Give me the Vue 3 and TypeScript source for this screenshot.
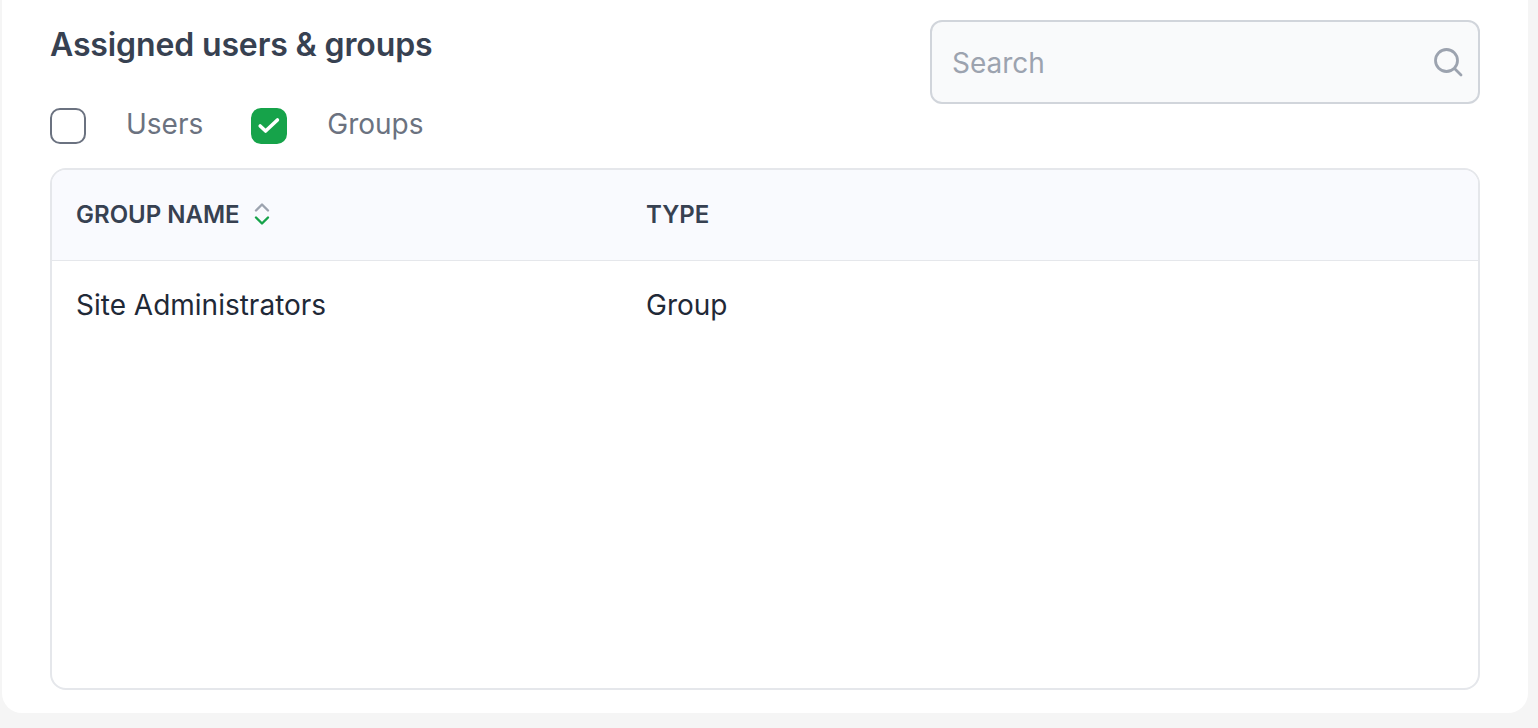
<template>
  <div class="page">
    <section class="card">
      <div class="top">
        <div class="left">
          <h2 class="title">Assigned users &amp; groups</h2>
          <div class="filters">
            <label v-for="f in filters" :key="f.id" class="filter">
              <span class="box" :class="{ checked: f.checked }">
                <svg v-if="f.checked" width="24" height="24" viewBox="0 0 24 24" fill="none">
                  <path d="M3.2 12 8.6 17 20.4 6" stroke="#fff" stroke-width="3.6" stroke-linecap="round" stroke-linejoin="round" />
                </svg>
              </span>
              <span class="filter-label">{{ f.name }}</span>
            </label>
          </div>
        </div>
        <div class="search">
          <span class="placeholder">Search</span>
          <svg width="32" height="32" viewBox="0 0 32 32" fill="none">
            <circle cx="14.5" cy="14.5" r="11" stroke="#9ca3af" stroke-width="2.8" />
            <path d="M23 23l6 6" stroke="#9ca3af" stroke-width="2.8" stroke-linecap="round" />
          </svg>
        </div>
      </div>

      <div class="table">
        <div class="row head">
          <div class="cell name">
            GROUP NAME
            <svg class="sort" width="18" height="24" viewBox="0 0 18 24" fill="none">
              <path d="M3 8.5 9 2.5l6 6" stroke="#9ca3af" stroke-width="2.4" stroke-linecap="round" stroke-linejoin="round" />
              <path d="M3 15.5 9 21.5l6-6" stroke="#16a34a" stroke-width="2.4" stroke-linecap="round" stroke-linejoin="round" />
            </svg>
          </div>
          <div class="cell">TYPE</div>
        </div>
        <div v-for="r in rows" :key="r.name" class="row body">
          <div class="cell name">{{ r.name }}</div>
          <div class="cell">{{ r.type }}</div>
        </div>
      </div>
    </section>
  </div>
</template>

<script setup lang="ts">
import { ref } from 'vue'

interface Filter {
  id: number
  name: string
  checked: boolean
}

const filters = ref<Filter[]>([
  { id: 1, name: 'Users', checked: false },
  { id: 2, name: 'Groups', checked: true }
])

const rows = ref([{ name: 'Site Administrators', type: 'Group' }])
</script>

<style>
html,
body {
  margin: 0;
  background: #f5f5f5;
}
</style>

<style scoped>
.page {
  height: 728px;
  box-sizing: border-box;
  padding: 0 10px 15px 2px;
  font-family: Inter, "Liberation Sans", sans-serif;
  overflow: hidden;
}
.card {
  height: 713px;
  box-sizing: border-box;
  background: #fff;
  border-radius: 0 0 20px 20px;
  padding: 20px 48px 23px;
  display: flex;
  flex-direction: column;
}
.top {
  display: flex;
  justify-content: space-between;
  align-items: flex-start;
  height: 148px;
  flex: none;
}
.title {
  margin: 4px 0 0;
  font-size: 32px;
  line-height: 42px;
  font-weight: 600;
  letter-spacing: -0.13px;
  color: #374151;
}
.filters {
  display: flex;
  gap: 48px;
  margin-top: 40px;
}
.filter {
  display: flex;
  align-items: flex-start;
  gap: 40px;
}
.box {
  width: 36px;
  height: 36px;
  margin-top: 2px;
  box-sizing: border-box;
  border: 2px solid #6b7280;
  border-radius: 10px;
  display: flex;
  align-items: center;
  justify-content: center;
}
.box.checked {
  background: #16a34a;
  border-color: #16a34a;
}
.filter-label {
  font-size: 28px;
  line-height: 36px;
  color: #6b7280;
}
.search {
  width: 550px;
  height: 84px;
  box-sizing: border-box;
  border: 2px solid #d1d5db;
  border-radius: 12px;
  background: #f9fafb;
  display: flex;
  align-items: center;
  justify-content: space-between;
  padding: 0 14px 0 20px;
}
.placeholder {
  font-size: 28px;
  color: #9ca3af;
  padding-top: 2px;
}
.table {
  flex: 1;
  border: 2px solid #e5e7eb;
  border-radius: 16px;
  overflow: hidden;
}
.row {
  display: grid;
  grid-template-columns: 570px 1fr;
  padding: 0 24px;
  align-items: center;
}
.head {
  height: 88px;
  padding-bottom: 2px;
  background: #f9fafe;
  border-bottom: 1px solid #e5e7eb;
  font-size: 24px;
  font-weight: 600;
  color: #374151;
}
.body {
  height: 88px;
  font-size: 28px;
  color: #1f2937;
}
.name {
  display: flex;
  align-items: center;
  gap: 13px;
}
</style>
